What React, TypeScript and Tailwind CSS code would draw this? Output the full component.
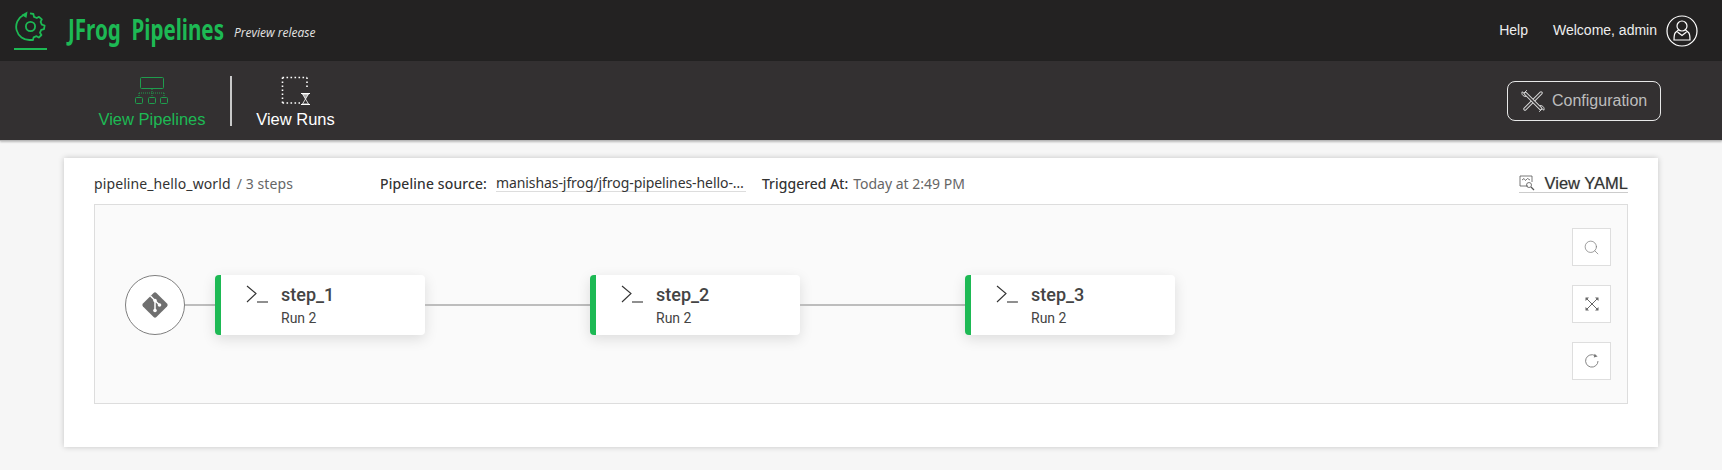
// JFrog Pipelines - pipeline detail page
import { Search } from "lucide-react";

const STEPS = ["step_1", "step_2", "step_3"];

function GearLogo() {
  return (
    <svg viewBox="0 0 32 32" className="w-[32px] h-[32px] text-[#1db954]" fill="none" stroke="currentColor" strokeWidth={1.8}>
      <circle cx="15.5" cy="16.5" r="4.6" />
      <path
        d="M8.5 5 A13.2 13.2 0 0 0 15 30 L18 30 L18.6 27.4 L21.5 26.2 L23.8 27.6 L26.4 25 L25 22.7 L26.2 19.9 L29 19.2 L29.6 15.5 L26.8 14.6 L25.6 11.8 L26.8 9.4 L24 6.8 L21.8 8 L19 6.9 L18.4 4 L15 3.4"
        strokeLinejoin="round"
      />
      <path d="M6.5 5 L12.5 1.5 L11.5 8 Z" fill="currentColor" stroke="none" />
    </svg>
  );
}

function PipelinesIcon() {
  return (
    <svg viewBox="0 0 34 30" className="w-[34px] h-[30px] text-[#1f9d4d]" fill="none" stroke="currentColor" strokeWidth={1}>
      <rect x="5.5" y="1.5" width="23" height="11" rx="1" />
      <path d="M17 13v4M4 17h26M4 17v3M17 17v3M29 17v3" strokeDasharray="1 1" />
      <rect x="0.5" y="21.5" width="7" height="6" rx="1" />
      <rect x="13.5" y="21.5" width="7" height="6" rx="1" />
      <rect x="25.5" y="21.5" width="7" height="6" rx="1" />
    </svg>
  );
}

function RunsIcon() {
  return (
    <svg viewBox="0 0 30 30" className="w-[30px] h-[30px] text-white" fill="none" stroke="currentColor">
      <path d="M1.5 1.5H26M26 1.5V12M1.5 1.5V27M1.5 27H19" strokeWidth={1.6} strokeDasharray="1.6 2.4" />
      <path d="M20 17.5h9M20 28.5h9" strokeWidth={1.2} />
      <path d="M21.5 18 L27.5 18 L24.5 23 Z" fill="currentColor" fillOpacity={0.6} strokeWidth={0.8} />
      <path d="M21.5 28 L24.5 23 L27.5 28 Z" strokeWidth={0.8} />
    </svg>
  );
}

function UserIcon() {
  return (
    <svg viewBox="0 0 32 32" className="w-[32px] h-[32px] text-white" fill="none" stroke="currentColor" strokeWidth={1.2}>
      <circle cx="16" cy="16" r="15" />
      <circle cx="16" cy="11" r="5" />
      <path d="M12.5 15 L9.5 17.5 C8 19 8 21 8 25 L24 25 C24 21 24 19 22.5 17.5 L19.5 15" />
      <path d="M11.5 17 L16 20.5 L20.5 17" />
    </svg>
  );
}

// crossed wrench and screwdriver: outlined bands, a light stroke with a dark one on top
function ToolsIcon() {
  const wrench = "M4.5 4.5 L19.5 19.5";
  const driver = "M20 4 L4 20";
  return (
    <svg viewBox="0 0 24 24" className="w-[24px] h-[24px]" fill="none" strokeLinecap="round">
      <path d={driver} stroke="#d8d8d8" strokeWidth={3.4} />
      <path d={driver} stroke="#333031" strokeWidth={1.5} />
      <path d={wrench} stroke="#d8d8d8" strokeWidth={3.4} />
      <path d={wrench} stroke="#333031" strokeWidth={1.5} />
      <path d="M5.5 1.5 L3 4.2 L1 2.8 C0.5 5 1.5 7.5 5 7.5" stroke="#d8d8d8" strokeWidth={1} strokeLinejoin="round" />
      <path d="M18.5 22.5 L21 19.8 L23 21.2 C23.5 19 22.5 16.5 19 16.5" stroke="#d8d8d8" strokeWidth={1} strokeLinejoin="round" />
    </svg>
  );
}

function GitBadge() {
  return (
    <svg viewBox="0 0 30 30" className="w-[30px] h-[30px]">
      <rect x="5.5" y="5.5" width="19" height="19" rx="2" transform="rotate(45 15 15)" fill="#6f6f6f" />
      <path d="M10.5 6 L15 10.5 M15 10.5 V20.5 M15 10.5 L19.5 15" stroke="#fff" strokeWidth={1.5} fill="none" />
      <circle cx="15" cy="10.5" r="1.8" fill="#fff" />
      <circle cx="19.5" cy="15" r="1.8" fill="#fff" />
      <circle cx="15" cy="20.5" r="1.8" fill="#fff" />
    </svg>
  );
}

function ShellIcon() {
  return (
    <svg viewBox="0 0 22 18" className="w-[22px] h-[18px] text-[#333]" fill="none" stroke="currentColor" strokeWidth={1.1}>
      <path d="M1 1 L10 8.5 L1 17" />
      <path d="M11 17 H22" />
    </svg>
  );
}

function YamlIcon() {
  return (
    <svg viewBox="0 0 16 16" className="w-[16px] h-[16px] text-[#555]" fill="none" stroke="currentColor" strokeWidth={0.8}>
      <path d="M9 11H1V1H13V7" />
      <path d="M3 5 L5 3.5 L6.5 5.5 L8.5 3.5 L11 5" />
      <circle cx="10" cy="10" r="2.5" />
      <path d="M12 12 L15 15" strokeWidth={1.2} />
    </svg>
  );
}

function ExpandIcon() {
  return (
    <svg viewBox="0 0 14 14" className="w-[14px] h-[14px] text-[#666]" fill="none" stroke="currentColor" strokeWidth={1}>
      <path d="M2 2 L12 12 M12 2 L2 12" />
      <path d="M0.5 0.5H4L0.5 4Z M13.5 0.5H10L13.5 4Z M0.5 13.5H4L0.5 10Z M13.5 13.5H10L13.5 10Z" fill="currentColor" stroke="none" />
    </svg>
  );
}

function RefreshIcon() {
  return (
    <svg viewBox="0 0 16 16" className="w-[16px] h-[16px] text-[#777]" fill="none" stroke="currentColor" strokeWidth={0.9}>
      <path d="M14 8 A6.2 6.2 0 1 1 11 2.6" />
      <path d="M10.6 0.8 L13.6 3.4 L9.8 4.4 Z" fill="currentColor" stroke="none" />
    </svg>
  );
}

function StepCard({ name }: { name: string }) {
  return (
    <div className="flex w-[210px] h-[60px] shrink-0 rounded-[4px] bg-white border-l-[6px] border-[#1db954] shadow-[0_4px_14px_rgba(0,0,0,0.12)] pl-[25px]">
      <div className="pt-[10px] w-[35px]">
        <ShellIcon />
      </div>
      <div className="font-['Roboto',sans-serif] text-[#444]">
        <div className="text-[18px] font-medium leading-[20px] mt-[10px]">{name}</div>
        <div className="text-[14px] leading-[18px] mt-[4px]">Run 2</div>
      </div>
    </div>
  );
}

function CtrlButton({ children }: { children: React.ReactNode }) {
  return (
    <div className="flex items-center justify-center w-[39px] h-[38px] bg-white border border-[#dedede]">
      {children}
    </div>
  );
}

export default function App() {
  return (
    <div className="w-[1722px] h-[470px] overflow-hidden bg-[#f6f6f6] font-['Liberation_Sans',sans-serif]">
      {/* top bar */}
      <header className="flex items-center h-[61px] bg-[#232222] pl-[14px] pr-[24px]">
        <div className="self-start flex flex-col items-center w-[33px] pt-[10px] h-[50px] border-b-[2px] border-[#1db954]">
          <GearLogo />
        </div>
        <div className="ml-[21px] w-[160px] font-['Noto_Sans',sans-serif] font-bold text-[28px] leading-[30px] text-[#1db954] whitespace-nowrap origin-left scale-x-[0.735] -mt-[3px]">
          JFrog&nbsp;&nbsp;Pipelines
        </div>
        <span className="ml-[6px] mt-[4px] font-['Open_Sans',sans-serif] italic text-[12px] text-[#e4e4e4]">Preview release</span>
        <div className="ml-auto flex items-center text-[14px] text-[#eeeeee]">
          <span>Help</span>
          <span className="ml-[25px] mr-[9px]">Welcome, admin</span>
          <UserIcon />
        </div>
      </header>

      {/* sub nav */}
      <nav className="flex items-center h-[80px] bg-[#333031] border-b-[1px] border-[#b8b8b8] shadow-[0_1px_2px_rgba(0,0,0,0.25)] pl-[98px] pr-[61px]">
        <div className="flex flex-col items-center w-[108px] mt-[4px]">
          <PipelinesIcon />
          <span className="mt-[3px] text-[16.5px] leading-[20px] text-[#1db954] whitespace-nowrap">View Pipelines</span>
        </div>
        <div className="ml-[24px] w-[2px] h-[50px] bg-[#c9c9c9]" />
        <div className="ml-[24px] flex flex-col items-center w-[79px] mt-[4px]">
          <RunsIcon />
          <span className="mt-[3px] text-[16.5px] leading-[20px] text-white whitespace-nowrap">View Runs</span>
        </div>
        <button className="ml-auto flex items-center gap-[7px] w-[154px] h-[40px] pl-[13px] rounded-[8px] border border-[#e8e8e8] text-[16px] text-[#bdbdbd]">
          <ToolsIcon />
          Configuration
        </button>
      </nav>

      {/* pipeline card */}
      <main className="mx-[64px] mt-[17px] w-[1594px] h-[289px] bg-white shadow-[0_0_6px_rgba(0,0,0,0.2)] px-[30px]">
        <div className="flex items-center h-[46px] font-['Noto_Sans',sans-serif] text-[14px] tracking-[0.1px] text-[#333] whitespace-nowrap pt-[4px]">
          <span>pipeline_hello_world</span>
          <span className="ml-[6px] text-[#666]">/ 3 steps</span>
          <span className="ml-[87px] tracking-[0.2px] [text-shadow:0_0_0.5px_rgba(0,0,0,0.4)]">Pipeline source:</span>
          <span className="ml-[9px] w-[250px] tracking-[-0.08px] border-b border-[#ddd] leading-[16px]">manishas-jfrog/jfrog-pipelines-hello-…</span>
          <span className="ml-[16px] tracking-[0.1px] [text-shadow:0_0_0.5px_rgba(0,0,0,0.4)]">Triggered At:</span>
          <span className="ml-[5px] tracking-normal text-[#666]">Today at 2:49 PM</span>
          <span className="ml-auto flex items-center gap-[10px] font-['Liberation_Sans',sans-serif] text-[16.5px] tracking-normal leading-[18px] border-b border-[#ccc] [text-shadow:0_0_1px_rgba(0,0,0,0.35)]">
            <YamlIcon />
            View YAML
          </span>
        </div>

        <section className="flex justify-between h-[200px] bg-[#fafafa] border border-[#dddddd] pl-[30px] pr-[16px]">
          <div className="flex items-center h-[182px] pt-[18px]">
            <div className="flex items-center justify-center w-[60px] h-[60px] shrink-0 rounded-full bg-white border border-[#7f7f7f]">
              <GitBadge />
            </div>
            <div className="w-[30px] h-[2px] bg-[#bdbdbd]" />
            {STEPS.map((s, i) => (
              <div key={s} className="flex items-center">
                {i > 0 && <div className="w-[165px] h-[2px] bg-[#bdbdbd]" />}
                <StepCard name={s} />
              </div>
            ))}
          </div>
          <div className="flex flex-col gap-[19px] pt-[23px]">
            <CtrlButton>
              <Search className="w-[17px] h-[17px] text-[#777]" strokeWidth={1} />
            </CtrlButton>
            <CtrlButton>
              <ExpandIcon />
            </CtrlButton>
            <CtrlButton>
              <RefreshIcon />
            </CtrlButton>
          </div>
        </section>
      </main>
    </div>
  );
}
